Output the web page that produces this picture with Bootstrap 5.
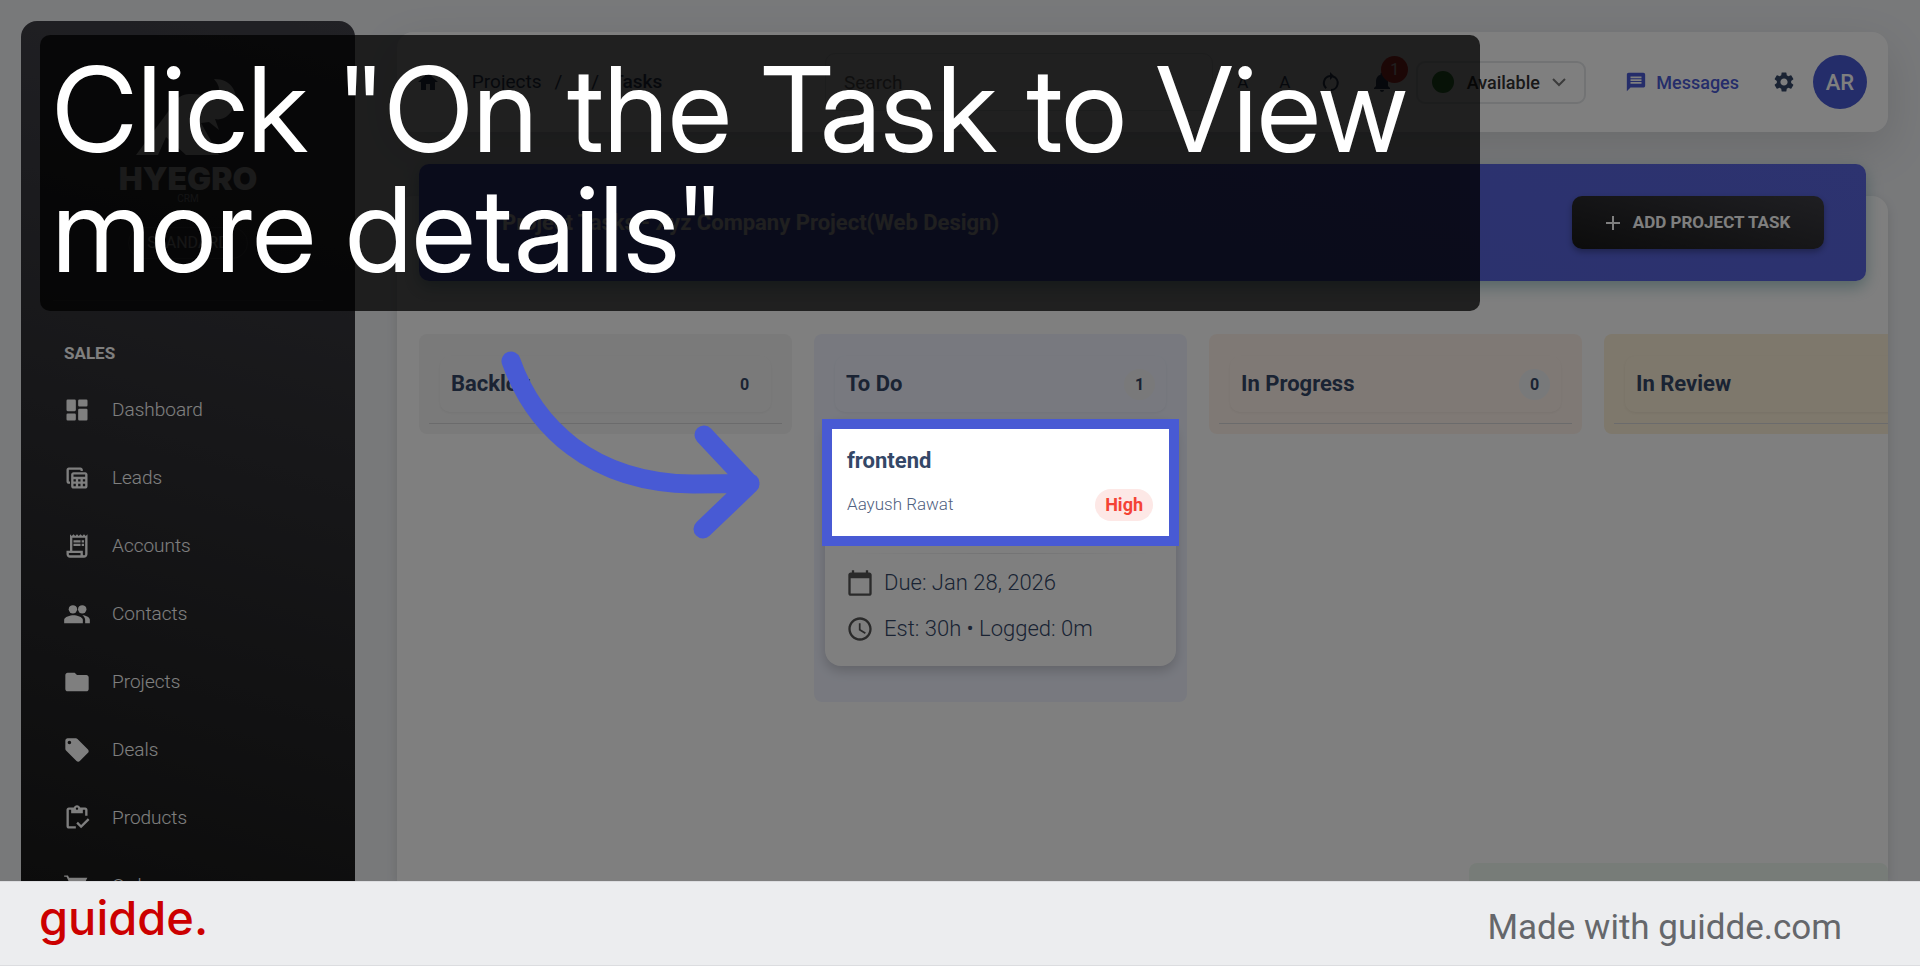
<!DOCTYPE html>
<html lang="en">
<head>
<meta charset="utf-8">
<meta name="viewport" content="width=device-width, initial-scale=1">
<title>Project Tasks</title>
<link href="https://cdn.jsdelivr.net/npm/bootstrap@5.3.0/dist/css/bootstrap.min.css" rel="stylesheet">
<style>
  body { font-family: Roboto, "Liberation Sans", sans-serif; background: #ecedef; color: #344767; }
  a { text-decoration: none; }
  .guide { height: 100vh; }
  .stage { background: #f0f2f5; min-height: 0; }
  .dimmer { background: rgba(0,0,0,.5); z-index: 10; }

  /* sidebar */
  .side-panel { width: 334px; margin: 21px 0 0 21px; border-radius: 16px 16px 0 0; background: linear-gradient(195deg, #42424a, #191919); color: #fff; }
  .side-brand { padding: 58px 0 0; height: 280px; border-bottom: 1px solid rgba(255,255,255,.08); margin: 0 32px; }
  .brand-name { font: 900 32px/28px Inter, sans-serif; opacity: .8; }
  .brand-sub { font-size: 10px; line-height: 12px; opacity: .5; }
  .plan-pill { border: 1px solid rgba(255,255,255,.2); border-radius: 16px; font-size: 16px; line-height: 30px; padding: 0 18px; margin-top: 22px; opacity: .6; }
  .side-title { font-size: 17px; line-height: 24px; font-weight: 700; padding: 40px 0 11px 43px; margin: 0; }
  .side-panel .nav-link { color: #fff; font-size: 19px; font-weight: 300; line-height: 28px; padding: 20px 0 20px 42px; gap: 21px; }
  .side-panel .nav-link svg { width: 28px; height: 28px; fill: currentColor; flex: none; }

  /* top bar */
  .workspace { margin-left: 42px; padding: 32px 32px 0 0; min-width: 0; }
  .top-bar { height: 100px; background: #fff; border-radius: 16px; padding: 0 21px; box-shadow: 0 16px 48px rgba(0,0,0,.12); z-index: 1; position: relative; }
  .crumbs { font-size: 19px; color: #344767; gap: 13px; width: 407px; }
  .top-search { width: 388px; height: 58px; font-size: 19px; border: 1px solid #e4e6e9; border-radius: 10px; padding: 0 18px; }
  .tool-row { gap: 27px; margin-right: 22px; }
  .icon-btn { width: 24px; height: 24px; border: 0; background: none; padding: 0; color: #344767; }
  .icon-btn svg { width: 24px; height: 24px; fill: currentColor; display: block; }
  .text-size { width: 15px; font-size: 17px; line-height: 24px; }
  .count-dot { top: -14px; left: 11px; width: 27px; height: 27px; border-radius: 50%; background: #e53935; color: #fff; font-size: 16px; line-height: 27px; }
  .status-btn { width: 170px; height: 43px; border: 2px solid #e4e6e9; border-radius: 9px; background: none; font-size: 18px; font-weight: 500; color: #333; padding: 0 18px 0 14px; }
  .status-btn i { width: 22px; height: 22px; border-radius: 50%; background: #388e3c; }
  .msg-link { color: #4a5ad4; font-size: 18px; font-weight: 500; gap: 9px; margin: 0 33px 0 39px; }
  .msg-link svg { width: 22px; height: 22px; fill: currentColor; }
  .gear-btn { margin-right: 17px; }
  .avatar-btn { width: 54px; height: 54px; border-radius: 50%; background: #485ad4; color: #fff; font-size: 22px; font-weight: 500; border: 0; }

  /* board */
  .board-card { margin-top: 64px; background: #fff; border-radius: 16px 16px 0 0; box-shadow: 0 4px 12px rgba(0,0,0,.12); }
  .board-banner { height: 117px; margin: -32px 22px 0; border-radius: 10px; padding: 0 42px 0 36px; background: linear-gradient(195deg, #5a66e0, #5462d8); box-shadow: 0 6px 16px rgba(0,100,110,.35); position: relative; z-index: 1; }
  .board-banner h1 { font-size: 22px; line-height: 32px; font-weight: 700; color: #fff; margin: 0; gap: 38px; }
  .add-btn { width: 252px; height: 53px; border: 0; border-radius: 10px; background: linear-gradient(195deg, #3e3e45, #191919); color: #fff; font-size: 17px; font-weight: 700; gap: 13px; box-shadow: 0 3px 6px rgba(0,0,0,.3); }
  .board-cols { gap: 22px; padding: 53px 0 0 22px; }
  .board-col { width: 373px; flex: none; border-radius: 8px; padding: 22px 10px 10px; }
  .col-head { height: 56px; margin: 0 11px 11px; padding: 0 11px; border-radius: 10px; box-shadow: 0 1px 3px rgba(0,0,0,.06); }
  .col-head h2 { font-size: 22px; line-height: 28px; font-weight: 700; margin: 0; }
  .col-count { width: 31px; height: 31px; border-radius: 50%; font-size: 16px; font-weight: 700; line-height: 31px; }
  .col-rule { height: 1px; background: #d6d6d8; }
  .task-item { background: #fff; border-radius: 16px; box-shadow: 0 5px 12px rgba(0,0,0,.18); margin: -4px 1px 26px; padding-bottom: 14px; }
  .task-focus { position: relative; z-index: 20; background: #fff; border: 10px solid #485ad4; margin: 0 -3px; height: 127px; padding: 16px 16px 0 15px; }
  .task-focus h3 { font-size: 22px; line-height: 32px; font-weight: 700; margin: 0 0 12px; }
  .task-owner { font-size: 17px; font-weight: 300; color: #506080; }
  .task-level { background: #fde8e6; color: #f44335; border-radius: 16px; font-size: 18px; line-height: 32px; font-weight: 700; padding: 0 10px; }
  .task-rule { height: 1px; margin: 7px 22px 6px; background: linear-gradient(90deg, transparent, #e6e6e8, transparent); }
  .task-line { font-size: 22px; font-weight: 300; line-height: 46px; padding-left: 21px; gap: 10px; }
  .task-line svg { width: 28px; height: 28px; fill: #555; }
  .next-col { width: 419px; height: 18px; background: #eff9f0; border-radius: 8px 8px 0 0; }

  /* guide layer */
  .guide-title { z-index: 30; top: 35px; left: 40px; right: 440px; border-radius: 10px; background: rgba(0,0,0,.75); color: #fff; padding: 14px 12px 22px; font: 400 118px/120px "Inter Display", Inter, sans-serif; font-variation-settings: "opsz" 32; margin: 0; }
  .guide-arrow { z-index: 30; top: 346px; left: 496px; width: 270px; height: 200px; fill: none; stroke: #485ad4; stroke-width: 19; stroke-linecap: round; stroke-linejoin: round; }
  .guide-foot { height: 85px; background: #ecedef; border-top: 1px solid #dcdde0; border-bottom: 1px solid #dcdde0; padding: 0 78px 0 39px; }
  .guide-logo { color: #c00; font: 500 47px/60px Inter, sans-serif; padding-bottom: 12px; }
  .guide-made { color: #65676b; font-size: 35px; line-height: 60px; padding-top: 8px; }
</style>
</head>
<body>
<div class="guide d-flex flex-column">
  <main class="stage flex-grow-1 position-relative overflow-hidden d-flex">
    <aside class="side-panel flex-shrink-0">
      <div class="side-brand d-flex flex-column align-items-center text-center">
        <svg width="104" height="78" viewBox="0 0 104 78" fill="#fff" fill-opacity=".8"><path d="M0 76 40 22C44 14 56 14 66 16 78 18 90 14 78 0c18 0 24 14 21 24-3 12-12 18-20 16l4 11-10-8-8 1 18 32H50L30 58 22 76zM66 48l14 26-18-22z"/></svg>
        <div class="brand-name mt-2">HYEGRO</div>
        <div class="brand-sub">CRM</div>
        <div class="plan-pill">STANDARD</div>
      </div>
      <h2 class="side-title">SALES</h2>
      <nav class="nav flex-column">
        <a class="nav-link d-flex align-items-center" href="#"><svg viewBox="0 0 24 24"><path d="M4 3h6a1 1 0 0 1 1 1v8a1 1 0 0 1-1 1H4a1 1 0 0 1-1-1V4a1 1 0 0 1 1-1zm0 12h6a1 1 0 0 1 1 1v4a1 1 0 0 1-1 1H4a1 1 0 0 1-1-1v-4a1 1 0 0 1 1-1zm10-4h6a1 1 0 0 1 1 1v8a1 1 0 0 1-1 1h-6a1 1 0 0 1-1-1v-8a1 1 0 0 1 1-1zm0-8h6a1 1 0 0 1 1 1v4a1 1 0 0 1-1 1h-6a1 1 0 0 1-1-1V4a1 1 0 0 1 1-1z"/></svg>Dashboard</a>
        <a class="nav-link d-flex align-items-center" href="#"><svg viewBox="0 0 24 24"><path d="M19 7H9c-1.100 0-2 .9-2 2v10c0 1.100.9 2 2 2h10c1.100 0 2-.9 2-2V9c0-1.100-.9-2-2-2zm0 2v2H9V9h10zm-6 6v-2h2v2h-2zm2 2v2h-2v-2h2zm-4-2H9v-2h2v2zm6-2h2v2h-2v-2zm-8 4h2v2H9v-2zm8 2v-2h2v2h-2zM6 17H5c-1.100 0-2-.9-2-2V5c0-1.100.9-2 2-2h10c1.100 0 2 .9 2 2v1h-2V5H5v10h1v2z"/></svg>Leads</a>
        <a class="nav-link d-flex align-items-center" href="#"><svg viewBox="0 0 24 24"><path d="M19.500 3.500 18 2l-1.500 1.500L15 2l-1.500 1.500L12 2l-1.500 1.500L9 2 7.500 3.500 6 2v14H3v3c0 1.660 1.340 3 3 3h12c1.660 0 3-1.340 3-3V2l-1.500 1.500zM15 20H6c-.55 0-1-.45-1-1v-1h10v2zm4-1c0 .55-.45 1-1 1s-1-.45-1-1v-3H8V5h11v14z"/><path d="M9 7h6v2H9zM16 7h2v2h-2zM9 10h6v2H9zM16 10h2v2h-2z"/></svg>Accounts</a>
        <a class="nav-link d-flex align-items-center" href="#"><svg viewBox="0 0 24 24"><path d="M16.500 13c.7.500 2.500 1.700 2.500 4v3h4v-3c0-2.700-4-3.900-6.500-4zM9 13c-2.670 0-8 1.340-8 4v3h16v-3c0-2.660-5.330-4-8-4z"/><circle cx="8.500" cy="8" r="3.600"/><circle cx="16.500" cy="8" r="3.600"/></svg>Contacts</a>
        <a class="nav-link d-flex align-items-center" href="#"><svg viewBox="0 0 24 24"><path d="M10 4H4c-1.100 0-1.990.9-1.990 2L2 18c0 1.100.9 2 2 2h16c1.100 0 2-.9 2-2V8c0-1.100-.9-2-2-2h-8l-2-2z"/></svg>Projects</a>
        <a class="nav-link d-flex align-items-center" href="#"><svg viewBox="0 0 24 24"><path d="m21.410 11.580-9-9C12.050 2.220 11.550 2 11 2H4c-1.100 0-2 .9-2 2v7c0 .55.22 1.050.59 1.420l9 9c.36.36.86.58 1.410.58s1.050-.22 1.410-.59l7-7c.37-.36.59-.86.59-1.410s-.23-1.060-.59-1.420zM5.500 7C4.670 7 4 6.330 4 5.500S4.670 4 5.500 4 7 4.670 7 5.500 6.330 7 5.500 7z"/></svg>Deals</a>
        <a class="nav-link d-flex align-items-center" href="#"><svg viewBox="0 0 24 24"><path d="M5 5h2v3h10V5h2v5h2V5c0-1.100-.9-2-2-2h-4.180C14.400 1.840 13.300 1 12 1s-2.400.84-2.820 2H5c-1.100 0-2 .9-2 2v14c0 1.100.9 2 2 2h6v-2H5V5zm7-2c.55 0 1 .45 1 1s-.45 1-1 1-1-.45-1-1 .45-1 1-1zm9.300 9.300-5.800 5.700-2.700-2.700-1.400 1.400 4.100 4.100 7.200-7.100z"/></svg>Products</a>
        <a class="nav-link d-flex align-items-center" href="#"><svg viewBox="0 0 24 24"><path d="M7 18c-1.100 0-2 .9-2 2s.9 2 2 2 2-.9 2-2-.9-2-2-2zM1 2v2h2l3.600 7.590-1.350 2.450C4.520 15.370 5.480 17 7 17h12v-2H7l1.100-2h7.450c.75 0 1.410-.41 1.750-1.030L20.880 5H5.210l-.94-2H1z"/></svg>Orders</a>
      </nav>
    </aside>

    <section class="workspace flex-grow-1 d-flex flex-column">
      <header class="top-bar d-flex align-items-center flex-shrink-0">
        <nav class="crumbs d-flex align-items-center" aria-label="Breadcrumb">
          <svg width="20" height="20" viewBox="0 0 20 20" fill="currentColor"><path d="M8 18v-6h4v6h5v-8h3L10 1 0 10h3v8z"/></svg>
          <span>/</span><a class="text-reset" href="#">Projects</a><span>/</span><span class="ms-3">/</span><span class="fw-medium">Tasks</span>
        </nav>
        <input class="top-search me-auto" type="search" placeholder="Search" aria-label="Search">
        <div class="tool-row d-flex align-items-center">
          <button class="icon-btn text-size" aria-label="Smaller text">A</button>
          <button class="icon-btn text-size" aria-label="Larger text">A</button>
          <button class="icon-btn" aria-label="Refresh"><svg viewBox="0 0 24 24"><path d="M11 2v3.100A8 8 0 0 0 6.500 19l1.400-1.500A6 6 0 0 1 11 7.100V10l4-4zM14.500 5.500l-.7 1.900A6 6 0 0 1 12 19v2a8 8 0 0 0 2.500-15.500z"/></svg></button>
          <button class="icon-btn position-relative" aria-label="Notifications"><svg viewBox="0 0 24 24"><path d="M12 22c1.100 0 2-.9 2-2h-4c0 1.100.9 2 2 2zm6-6v-5c0-3.070-1.640-5.640-4.500-6.320V4c0-.83-.67-1.500-1.500-1.500s-1.500.67-1.500 1.500v.68C7.630 5.360 6 7.920 6 11v5l-2 2v1h16v-1l-2-2z"/></svg><span class="count-dot position-absolute">1</span></button>
        </div>
        <button class="status-btn d-flex align-items-center justify-content-between"><i></i>Available<svg width="14" height="9" viewBox="0 0 14 9" fill="none" stroke="#777" stroke-width="2"><path d="m1 1 6 6 6-6"/></svg></button>
        <a class="msg-link d-flex align-items-center" href="#"><svg viewBox="0 0 24 24"><path d="M20 2H4c-1.100 0-1.990.9-1.990 2L2 22l4-4h14c1.100 0 2-.9 2-2V4c0-1.100-.9-2-2-2zm-2 12H6v-2h12v2zm0-3H6V9h12v2zm0-3H6V6h12v2z"/></svg>Messages</a>
        <button class="icon-btn gear-btn" aria-label="Settings"><svg viewBox="0 0 24 24"><path d="M19.140 12.940c.04-.3.06-.61.06-.94 0-.32-.02-.64-.07-.94l2.030-1.580a.49.49 0 0 0 .12-.61l-1.920-3.320a.49.49 0 0 0-.59-.22l-2.390.96c-.5-.38-1.030-.7-1.620-.94l-.36-2.540a.48.48 0 0 0-.48-.41h-3.840c-.24 0-.43.17-.47.41l-.36 2.540c-.59.24-1.130.57-1.620.94l-2.390-.96a.48.48 0 0 0-.59.22L2.740 8.870c-.12.21-.08.47.12.61l2.030 1.580c-.05.3-.09.63-.09.94s.02.64.07.94l-2.030 1.580a.49.49 0 0 0-.12.61l1.920 3.320c.12.22.37.29.59.22l2.390-.96c.5.38 1.030.7 1.620.94l.36 2.540c.05.24.24.41.48.41h3.840c.24 0 .44-.17.47-.41l.36-2.540c.59-.24 1.130-.56 1.620-.94l2.390.96c.22.08.47 0 .59-.22l1.920-3.320a.48.48 0 0 0-.12-.61l-2.010-1.580zM12 15.600c-1.980 0-3.600-1.620-3.600-3.600s1.620-3.600 3.600-3.600 3.600 1.620 3.600 3.600-1.620 3.600-3.600 3.600z"/></svg></button>
        <button class="avatar-btn p-0">AR</button>
      </header>

      <div class="board-card flex-grow-1 d-flex flex-column">
        <div class="board-banner d-flex align-items-center justify-content-between flex-shrink-0">
          <h1 class="d-flex align-items-center"><a class="text-white d-flex" href="#" aria-label="Back"><svg width="9" height="14" viewBox="0 0 9 14" fill="none" stroke="currentColor" stroke-width="2"><path d="M8 1 2 7l6 6"/></svg></a>Project Tasks - Xyz Company Project(Web Design)</h1>
          <button class="add-btn d-flex align-items-center justify-content-center"><svg width="14" height="14" viewBox="0 0 14 14" stroke="currentColor" stroke-width="2"><path d="M7 0v14M0 7h14"/></svg>ADD PROJECT TASK</button>
        </div>
        <div class="board-cols d-flex align-items-start overflow-hidden">
          <section class="board-col" style="background:#f5f5f5">
            <div class="col-head d-flex align-items-center justify-content-between"><h2>Backlog</h2><span class="col-count text-center">0</span></div>
            <div class="col-rule"></div>
          </section>
          <section class="board-col" style="background:#f0f3ff">
            <div class="col-head d-flex align-items-center justify-content-between"><h2>To Do</h2><span class="col-count text-center" style="background:#f2f2f4">1</span></div>
            <article class="task-item">
              <div class="task-focus">
                <h3>frontend</h3>
                <div class="d-flex align-items-center justify-content-between"><span class="task-owner">Aayush Rawat</span><span class="task-level">High</span></div>
              </div>
              <div class="task-rule"></div>
              <div class="task-line d-flex align-items-center"><svg viewBox="0 0 24 24"><path d="M20 3h-1V1h-2v2H7V1H5v2H4c-1.100 0-2 .9-2 2v16c0 1.100.9 2 2 2h16c1.100 0 2-.9 2-2V5c0-1.100-.9-2-2-2zm0 18H4V8h16v13z"/></svg>Due: Jan 28, 2026</div>
              <div class="task-line d-flex align-items-center"><svg viewBox="0 0 24 24"><path d="M12 2C6.500 2 2 6.500 2 12s4.500 10 10 10 10-4.500 10-10S17.500 2 12 2zm0 18c-4.400 0-8-3.600-8-8s3.600-8 8-8 8 3.600 8 8-3.600 8-8 8zm.5-13H11v6l5.200 3.200.8-1.300-4.500-2.700z"/></svg>Est: 30h • Logged: 0m</div>
            </article>
          </section>
          <section class="board-col" style="background:#fff3eb">
            <div class="col-head d-flex align-items-center justify-content-between"><h2>In Progress</h2><span class="col-count text-center" style="background:#f0f2f5">0</span></div>
            <div class="col-rule"></div>
          </section>
          <section class="board-col" style="background:#fcf0d8">
            <div class="col-head d-flex align-items-center"><h2>In Review</h2></div>
            <div class="col-rule"></div>
          </section>
        </div>
        <div class="next-col mt-auto ms-auto"></div>
      </div>
    </section>

    <div class="dimmer position-absolute top-0 start-0 w-100 h-100"></div>
    <p class="guide-title position-absolute">Click "On the Task to View more details"</p>
    <svg class="guide-arrow position-absolute" viewBox="0 0 270 200"><path d="M15 15C38 80 95 137 197 138Q225 138 254 137M208 89l46 49-47 45"/></svg>
  </main>
  <footer class="guide-foot d-flex align-items-center justify-content-between flex-shrink-0">
    <a class="guide-logo" href="#">guidde.</a>
    <span class="guide-made">Made with guidde.com</span>
  </footer>
</div>
<script src="https://cdn.jsdelivr.net/npm/bootstrap@5.3.0/dist/js/bootstrap.bundle.min.js"></script>
</body>
</html>
